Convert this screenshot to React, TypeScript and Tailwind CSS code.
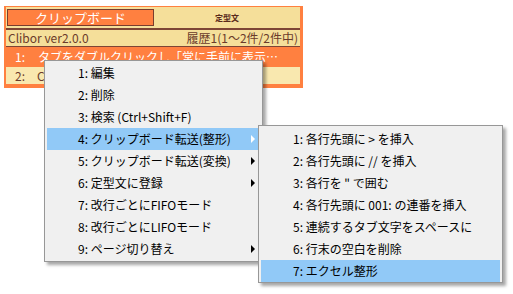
import React from "react";

const mainItems: { t: string; sub?: boolean; hl?: boolean }[] = [
  { t: "1: 編集" },
  { t: "2: 削除" },
  { t: "3: 検索 (Ctrl+Shift+F)" },
  { t: "4: クリップボード転送(整形)", sub: true, hl: true },
  { t: "5: クリップボード転送(変換)", sub: true },
  { t: "6: 定型文に登録", sub: true },
  { t: "7: 改行ごとにFIFOモード" },
  { t: "8: 改行ごとにLIFOモード" },
  { t: "9: ページ切り替え", sub: true },
];

const subItems: { t: string; hl?: boolean }[] = [
  { t: "1: 各行先頭に > を挿入" },
  { t: "2: 各行先頭に // を挿入" },
  { t: '3: 各行を " で囲む' },
  { t: "4: 各行先頭に 001: の連番を挿入" },
  { t: "5: 連続するタブ文字をスペースに" },
  { t: "6: 行末の空白を削除" },
  { t: "7: エクセル整形", hl: true },
];

const font = { fontFamily: '"Noto Sans CJK JP", "Noto Sans", sans-serif' };

export default function App() {
  return (
    <div
      className="relative w-[513px] h-[294px] bg-white overflow-hidden"
      style={font}
    >
      {/* Clibor window */}
      <div className="ml-[4px] mt-[6px] w-[299px] bg-[#ff8040] pl-[2px] pr-[3px] pt-[1px] pb-[4px] flex flex-col">
        <div className="h-[21px] bg-[#f5df9a] flex items-center">
          <div className="ml-[1px] w-[147px] h-[17px] border border-[#7a3d2d] bg-[#ff8040] flex items-center justify-center text-white text-[13px] leading-none">
            クリップボード
          </div>
          <div className="flex-1 flex justify-center text-[8px] font-bold text-[#5a2a1a] leading-none">
            定型文
          </div>
        </div>
        <div className="h-[2px] bg-[#7d4535]" />
        <div className="h-[16px] bg-[#f5df9a] flex items-center justify-between pl-[2px] pr-[2px] text-[12px] leading-none text-[#6b3b2b]">
          <span>Clibor ver2.0.0</span>
          <span>履歴1(1～2件/2件中)</span>
        </div>
        <div className="h-[1px] bg-[#7d4535]" />
        <div className="h-[20px] flex items-center text-white text-[12px] leading-none whitespace-nowrap overflow-hidden">
          <span className="pl-[9px] w-[32px]">1:</span>
          <span>タブをダブルクリックし「常に手前に表示…</span>
        </div>
        <div className="h-[17px] bg-[#f9e8af] flex items-center text-[#6b3b2b] text-[12px] leading-none whitespace-nowrap overflow-hidden">
          <span className="pl-[9px] w-[31px]">2:</span>
          <span>Clibor</span>
        </div>
      </div>

      {/* Main context menu */}
      <div className="absolute left-[44px] top-[60px] w-[219px] h-[202px] bg-[#f0f0f0] border border-[#979797] pt-[1px] px-[2px] shadow-[3px_3px_3px_rgba(0,0,0,0.35)]">
        {mainItems.map((it) => (
          <div
            key={it.t}
            className={
              "h-[22px] flex items-center pl-[31px] pr-[5px] text-[12px] leading-none text-black " +
              (it.hl ? "bg-[#91c9f7]" : "")
            }
          >
            <span className="flex-1 whitespace-nowrap">{it.t}</span>
            {it.sub && (
              <span
                className={
                  "w-0 h-0 border-y-[4px] border-y-transparent border-l-[4px] " +
                  (it.hl ? "border-l-white" : "border-l-black")
                }
              />
            )}
          </div>
        ))}
      </div>

      {/* Submenu */}
      <div className="absolute left-[258px] top-[125px] w-[245px] h-[158px] bg-[#f0f0f0] border border-[#979797] pt-[2px] px-[2px] shadow-[3px_3px_3px_rgba(0,0,0,0.35)]">
        {subItems.map((it) => (
          <div
            key={it.t}
            className={
              "h-[22px] flex items-center pl-[32px] text-[12px] leading-none text-black whitespace-nowrap " +
              (it.hl ? "bg-[#91c9f7]" : "")
            }
          >
            {it.t}
          </div>
        ))}
      </div>
    </div>
  );
}
